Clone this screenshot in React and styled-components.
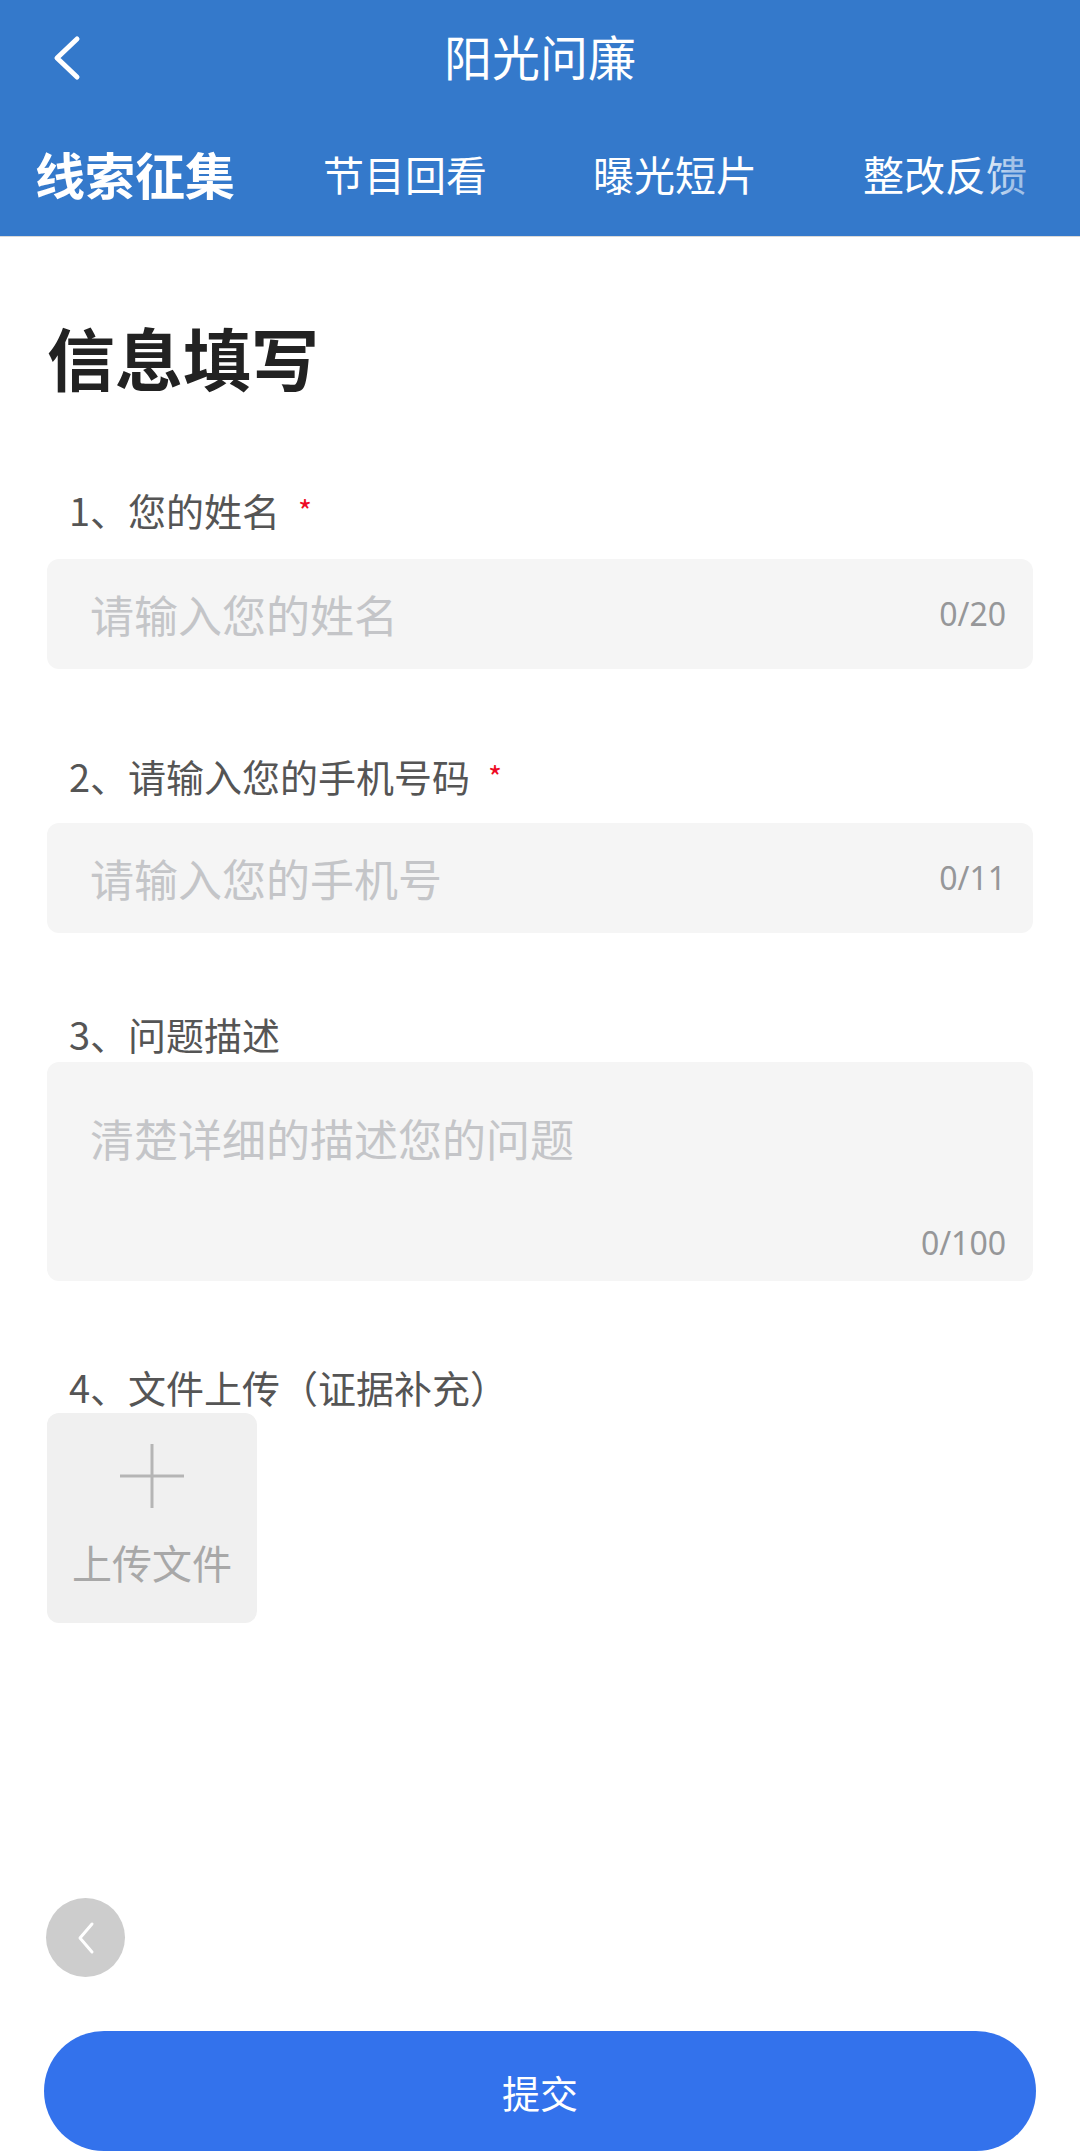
import React from "react";
import styled, { createGlobalStyle } from "styled-components";

const Global = createGlobalStyle`
  html, body { margin: 0; padding: 0; background: #fff; }
  body { font-family: "Noto Sans CJK SC", "Noto Sans", sans-serif; }
  * { box-sizing: border-box; }
`;

const Page = styled.div`
  position: relative;
  min-height: 100vh;
  display: flex;
  flex-direction: column;
  background: #fff;
`;

const Header = styled.header`
  background: #3479cb;
  height: 236px;
  display: flex;
  flex-direction: column;
  box-shadow: 0 1px 0 rgba(0, 0, 0, 0.15);
`;

const TopBar = styled.div`
  position: relative;
  height: 110px;
  display: flex;
  align-items: center;
  justify-content: center;
`;

const BackBtn = styled.button`
  position: absolute;
  left: 50px;
  top: 32px;
  width: 34px;
  height: 52px;
  padding: 0;
  border: 0;
  background: none;
  display: flex;
  align-items: center;
  justify-content: center;
`;

const Title = styled.h1`
  margin: 0;
  color: #fff;
  font-size: 48px;
  font-weight: 400;
  line-height: 1;
`;

const Tabs = styled.nav`
  position: relative;
  height: 126px;
  display: grid;
  grid-template-columns: repeat(4, 1fr);
  align-items: center;
`;

const Tab = styled.div`
  text-align: center;
  color: #fff;
  font-size: ${(p) => (p.$active ? "50px" : "41px")};
  font-weight: ${(p) => (p.$active ? 700 : 400)};
  line-height: 1;
  white-space: nowrap;
`;

const TabFade = styled.div`
  position: absolute;
  right: 0;
  top: 0;
  bottom: 0;
  width: 104px;
  background: linear-gradient(
    to right,
    rgba(52, 121, 203, 0) 0%,
    rgba(52, 121, 203, 0.45) 35%,
    rgba(52, 121, 203, 0.5) 100%
  );
  pointer-events: none;
`;

const Content = styled.main`
  padding: 0 47px;
  display: flex;
  flex-direction: column;
`;

const Heading = styled.h2`
  margin: 80px 0 0;
  font-size: 68px;
  font-weight: 700;
  line-height: 82px;
  color: #222;
`;

const Label = styled.div`
  margin-top: ${(p) => p.$mt}px;
  margin-bottom: ${(p) => p.$mb}px;
  padding-left: 22px;
  font-size: 38px;
  line-height: 52px;
  color: #555;
  display: flex;
  align-items: flex-start;
`;

const Star = styled.span`
  color: #ee0a24;
  font-size: 30px;
  line-height: 52px;
  margin-left: 18px;
`;

const FieldBox = styled.div`
  background: #f5f5f5;
  border-radius: 12px;
  height: 110px;
  padding: 0 27px 0 43px;
  display: flex;
  align-items: center;
`;

const TextInput = styled.input`
  flex: 1;
  min-width: 0;
  border: 0;
  outline: none;
  background: transparent;
  font-family: inherit;
  font-size: 44px;
  color: #333;
  padding: 0;
  &::placeholder { color: #c4c5c8; }
`;

const Counter = styled.span`
  font-size: 32px;
  color: #969799;
  line-height: 44px;
  font-family: "Noto Sans", sans-serif;
`;

const AreaBox = styled.div`
  background: #f5f5f5;
  border-radius: 12px;
  height: 219px;
  padding: 46px 27px 16px 43px;
  display: flex;
  flex-direction: column;
`;

const TextArea = styled.textarea`
  flex: 1;
  border: 0;
  outline: none;
  resize: none;
  background: transparent;
  font-family: inherit;
  font-size: 44px;
  line-height: 60px;
  color: #333;
  padding: 0;
  &::placeholder { color: #c4c5c8; }
`;

const AreaCounter = styled(Counter)`
  align-self: flex-end;
`;

const Upload = styled.div`
  width: 210px;
  height: 210px;
  border-radius: 12px;
  background: #f0f0f0;
  display: flex;
  flex-direction: column;
  align-items: center;
  padding-top: 31px;
  gap: 30px;
`;

const UploadText = styled.span`
  font-size: 40px;
  line-height: 48px;
  color: #a8a8a8;
`;

const FloatBack = styled.div`
  position: absolute;
  left: 46px;
  bottom: 176px;
  width: 79px;
  height: 79px;
  border-radius: 50%;
  background: #cdcdcd;
  display: flex;
  align-items: center;
  justify-content: center;
`;

const Footer = styled.footer`
  margin-top: auto;
  padding: 0 44px 2px;
`;

const Submit = styled.button`
  width: 100%;
  height: 120px;
  border: 0;
  border-radius: 60px;
  background: #3372ec;
  color: #fff;
  font-family: inherit;
  font-size: 38px;
  display: flex;
  align-items: center;
  justify-content: center;
`;

const Chevron = ({ w, h, sw }) => (
  <svg width={w} height={h} viewBox={`0 0 ${w} ${h}`} fill="none">
    <polyline
      points={`${w - sw},${sw} ${sw},${h / 2} ${w - sw},${h - sw}`}
      stroke="#fff"
      strokeWidth={sw}
      strokeLinecap="round"
      strokeLinejoin="round"
    />
  </svg>
);

export default function App() {
  return (
    <>
      <Global />
      <Page>
        <Header>
          <TopBar>
            <BackBtn aria-label="返回">
              <Chevron w={30} h={48} sw={5} />
            </BackBtn>
            <Title>阳光问廉</Title>
          </TopBar>
          <Tabs>
            <Tab $active>线索征集</Tab>
            <Tab>节目回看</Tab>
            <Tab>曝光短片</Tab>
            <Tab>整改反馈</Tab>
            <TabFade />
          </Tabs>
        </Header>
        <Content>
          <Heading>信息填写</Heading>

          <Label $mt={86} $mb={23}>
            1、您的姓名<Star>*</Star>
          </Label>
          <FieldBox>
            <TextInput placeholder="请输入您的姓名" maxLength={20} />
            <Counter>0/20</Counter>
          </FieldBox>

          <Label $mt={81} $mb={21}>
            2、请输入您的手机号码<Star>*</Star>
          </Label>
          <FieldBox>
            <TextInput placeholder="请输入您的手机号" maxLength={11} />
            <Counter>0/11</Counter>
          </FieldBox>

          <Label $mt={75} $mb={2}>3、问题描述</Label>
          <AreaBox>
            <TextArea placeholder="清楚详细的描述您的问题" maxLength={100} />
            <AreaCounter>0/100</AreaCounter>
          </AreaBox>

          <Label $mt={80} $mb={0}>4、文件上传（证据补充）</Label>
          <Upload>
            <svg width="64" height="64" viewBox="0 0 64 64">
              <path d="M32 0V64M0 32H64" stroke="#b5b5b5" strokeWidth="3" />
            </svg>
            <UploadText>上传文件</UploadText>
          </Upload>
        </Content>

        <FloatBack>
          <Chevron w={18} h={34} sw={3} />
        </FloatBack>

        <Footer>
          <Submit>提交</Submit>
        </Footer>
      </Page>
    </>
  );
}
